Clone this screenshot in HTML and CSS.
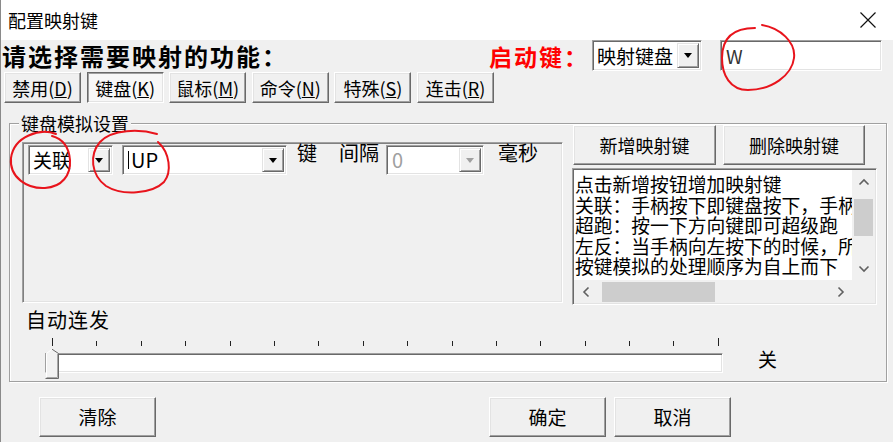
FILE: index.html
```html
<!DOCTYPE html>
<html lang="zh-CN">
<head>
<meta charset="utf-8">
<title>配置映射键</title>
<link rel="stylesheet" href="styles.css">
</head>
<body>
<div class="window">
  <div class="titlebar">
    <span class="title">配置映射键</span>
    <svg class="close" viewBox="0 0 18 18" width="18" height="18"><path d="M1.5 1.5L16.5 16.5M16.5 1.5L1.5 16.5" stroke="#111" stroke-width="1.2" fill="none"/></svg>
  </div>
  <div class="client">
    <div class="header">
      <div class="heading">请选择需要映射的功能：</div>
      <div class="hotkey-label">启动键：</div>
      <div class="field combo combo-hotkey"><span class="combo-text">映射键盘</span><span class="drop"><i class="tri"></i></span></div>
      <div class="field edit-key">W</div>
    </div>
    <div class="tabs">
      <button class="btn tab">禁用(<u>D</u>)</button>
      <button class="btn tab active">键盘(<u>K</u>)</button>
      <button class="btn tab">鼠标(<u>M</u>)</button>
      <button class="btn tab">命令(<u>N</u>)</button>
      <button class="btn tab">特殊(<u>S</u>)</button>
      <button class="btn tab">连击(<u>R</u>)</button>
    </div>
    <div class="group">
      <div class="group-label">键盘模拟设置</div>
      <div class="group-top">
        <div class="panel">
          <div class="field combo combo-mode"><span class="combo-text">关联</span><span class="drop"><i class="tri"></i></span></div>
          <div class="field combo combo-key"><span class="combo-text latin"><span class="caret"></span>UP</span><span class="drop"><i class="tri"></i></span></div>
          <span class="lbl lbl-key">键</span>
          <span class="lbl lbl-int">间隔</span>
          <div class="field combo combo-int disabled"><span class="combo-text latin">0</span><span class="drop"><i class="tri"></i></span></div>
          <span class="lbl lbl-ms">毫秒</span>
        </div>
        <div class="side">
          <div class="side-buttons">
            <button class="btn btn-add">新增映射键</button>
            <button class="btn btn-del">删除映射键</button>
          </div>
          <div class="field listbox">
            <div class="list-content">
              <div class="line">点击新增按钮增加映射键</div>
              <div class="line">关联：手柄按下即键盘按下，手柄松开即键盘松开</div>
              <div class="line">超跑：按一下方向键即可超级跑</div>
              <div class="line">左反：当手柄向左按下的时候，所有的左右方向反转</div>
              <div class="line">按键模拟的处理顺序为自上而下</div>
            </div>
            <div class="vscroll">
              <div class="sbtn"><svg width="12" height="8" viewBox="0 0 12 8"><path d="M1.5 6.5L6 2L10.5 6.5" stroke="#606060" stroke-width="1.6" fill="none"/></svg></div>
              <div class="vthumb"></div>
              <div class="sfill"></div>
              <div class="sbtn"><svg width="12" height="8" viewBox="0 0 12 8"><path d="M1.5 1.5L6 6L10.5 1.5" stroke="#606060" stroke-width="1.6" fill="none"/></svg></div>
            </div>
            <div class="hscroll">
              <div class="sbtn"><svg width="8" height="12" viewBox="0 0 8 12"><path d="M6.5 1.5L2 6L6.5 10.5" stroke="#606060" stroke-width="1.6" fill="none"/></svg></div>
              <div class="hthumb"></div>
              <div class="sfill"></div>
              <div class="sbtn"><svg width="8" height="12" viewBox="0 0 8 12"><path d="M1.5 1.5L6 6L1.5 10.5" stroke="#606060" stroke-width="1.6" fill="none"/></svg></div>
            </div>
            <div class="corner"></div>
          </div>
        </div>
      </div>
      <div class="auto-label">自动连发</div>
      <div class="slider-row">
        <div class="slider">
          <div class="ticks">
            <i class="tick end"></i><i class="tick"></i><i class="tick"></i><i class="tick"></i>
            <i class="tick"></i><i class="tick"></i><i class="tick"></i><i class="tick"></i>
            <i class="tick"></i><i class="tick"></i><i class="tick"></i><i class="tick"></i>
            <i class="tick"></i><i class="tick"></i><i class="tick"></i><i class="tick end"></i>
          </div>
          <div class="field track"></div>
          <svg class="thumb" width="15" height="31" viewBox="0 0 15 31">
            <path d="M1 5.5L7 0.8L13.5 5.5V30H1Z" fill="#f2f2f2"/>
            <path d="M1.5 30V5.5L7 1.2" stroke="#ffffff" stroke-width="1" fill="none"/>
            <path d="M7 1.2L13.5 5.5V30.5H0.5" stroke="#6a6a6a" stroke-width="1" fill="none"/>
            <path d="M12.5 6V29.5H1.5" stroke="#a8a8a8" stroke-width="1" fill="none"/>
          </svg>
        </div>
        <span class="slider-value">关</span>
      </div>
    </div>
    <div class="footer">
      <button class="btn big">清除</button>
      <button class="btn big btn-ok">确定</button>
      <button class="btn big btn-cancel">取消</button>
    </div>
  </div>
  <svg class="annotations" width="893" height="442" viewBox="0 0 893 442">
    <path d="M762 25C780 28 796 42 794 58C792 75 772 90 748 90C730 90 722 75 722 58C722 40 731 28 755 28" stroke="#e8141c" stroke-width="2" fill="none" stroke-linecap="round"/>
    <path d="M56 134C40 128 14 136 11 158C9 178 28 189 45 188C62 187 71 175 70 160C69 148 63 139 52 136" stroke="#e8141c" stroke-width="2" fill="none" stroke-linecap="round"/>
    <path d="M157 134C140 129 112 129 100 142C89 155 91 175 106 186C122 196 152 194 164 182C172 172 170 153 158 142" stroke="#e8141c" stroke-width="2" fill="none" stroke-linecap="round"/>
  </svg>
</div>
</body>
</html>
```

FILE: styles.css
```css
* { box-sizing: border-box; }
html, body { margin: 0; padding: 0; }
body {
  width: 893px;
  height: 442px;
  overflow: hidden;
  background: #f0f0f0;
  font-family: "Noto Sans CJK SC", "Noto Sans", sans-serif;
  color: #000;
}
.window {
  position: relative;
  width: 893px;
  height: 442px;
  border-left: 1px solid #8a8a8a;
}
.titlebar {
  height: 40px;
  background: #fff;
  display: flex;
  align-items: center;
  padding-left: 7px;
}
.title { flex: 1; font-size: 18px; line-height: 20px; }
.close { margin-right: 16px; }

/* generic sunken field */
.field {
  background: #fff;
  border: 1px solid;
  border-color: #a0a0a0 #ffffff #ffffff #a0a0a0;
  box-shadow: inset 1px 1px #696969, inset -1px -1px #e3e3e3;
}

/* header */
.header {
  display: flex;
  align-items: center;
  height: 31px;
  padding-left: 1px;
}
.heading {
  width: 487px;
  font-size: 24px;
  font-weight: bold;
  line-height: 28px;
  white-space: nowrap;
  letter-spacing: 2px;
}
.hotkey-label {
  width: 103px;
  color: #f00;
  font-size: 23px;
  font-weight: bold;
  line-height: 28px;
  white-space: nowrap;
  letter-spacing: 2px;
}
.combo {
  display: flex;
  align-items: stretch;
  padding: 2px;
}
.combo-text {
  flex: 1;
  display: flex;
  align-items: center;
  padding-left: 2px;
  font-size: 19px;
  line-height: 22px;
  white-space: nowrap;
}
.combo-text.latin { font-size: 20px; padding-left: 3px; }
.caret { width: 1px; height: 18px; background: #000; margin-right: 2px; }
.drop {
  width: 22px;
  background: #f0f0f0;
  border: 1px solid;
  border-color: #e3e3e3 #696969 #696969 #e3e3e3;
  box-shadow: inset 1px 1px #fff, inset -1px -1px #a0a0a0;
  display: flex;
  align-items: center;
  justify-content: center;
}
.tri {
  width: 0;
  height: 0;
  border-left: 4.5px solid transparent;
  border-right: 4.5px solid transparent;
  border-top: 5px solid #000;
}
.combo-hotkey { width: 110px; height: 31px; }
.edit-key {
  width: 162px;
  height: 31px;
  margin-left: 18px;
  padding-left: 5px;
  font-size: 19px;
  line-height: 29px;
  color: #333;
}

/* buttons */
.btn {
  margin: 0;
  padding: 0;
  font-family: inherit;
  font-size: 18px;
  line-height: 20px;
  color: #000;
  background: #f0f0f0;
  border: 1px solid;
  border-color: #ffffff #696969 #696969 #ffffff;
  box-shadow: inset -1px -1px #a0a0a0, inset 1px 1px #e3e3e3;
}
.btn u { text-underline-offset: 1px; }
.tabs {
  display: flex;
  gap: 5.6px;
  margin-top: 1px;
  height: 31px;
  padding-left: 3px;
}
.tab { width: 77px; height: 31px; }
.tab.active {
  background: #f7f7f7;
  border-color: #696969 #ffffff #ffffff #696969;
  box-shadow: inset 1px 1px #a0a0a0, inset -1px -1px #e3e3e3;
}

/* group box */
.group {
  position: relative;
  margin: 20px 0 0 8px;
  width: 878px;
  height: 259px;
  border: 1px solid #a0a0a0;
  box-shadow: inset 1px 1px #fff, 1px 1px #fff;
  padding-left: 12px;
}
.group-label {
  position: absolute;
  left: 9px;
  top: -11px;
  padding: 0 2px;
  background: #f0f0f0;
  font-size: 18px;
  line-height: 20px;
}
.group-top {
  display: flex;
  align-items: flex-start;
  height: 181px;
}
.panel {
  margin-top: 18px;
  width: 541px;
  height: 161px;
  display: flex;
  align-items: flex-start;
  padding: 1px;
  border: 1px solid;
  border-color: #a0a0a0 #ffffff #ffffff #a0a0a0;
  box-shadow: inset 1px 1px #808080, inset -1px -1px #e3e3e3;
}
.panel .combo { height: 30px; margin-top: 1px; }
.combo-mode { width: 85px; margin-left: 4px; }
.combo-key { width: 165px; margin-left: 9px; }
.combo-int { width: 98px; margin-left: 7px; height: 31px; margin-top: 0; }
.combo.disabled .combo-text { color: #a0a0a0; }
.combo.disabled .tri { border-top-color: #a0a0a0; }
.lbl { font-size: 20px; line-height: 20px; margin-top: -1px; white-space: nowrap; }
.lbl-key { margin-left: 10px; }
.lbl-int { margin-left: 22px; }
.lbl-ms { margin-left: 14px; }

.side { margin-left: 9px; width: 305px; }
.side-buttons { display: flex; margin-top: 1px; padding-left: 1px; gap: 7px; }
.btn-add { width: 143px; height: 40px; }
.btn-del { width: 142px; height: 40px; }

.listbox {
  margin-top: 3px;
  width: 305px;
  height: 137px;
  padding: 1px;
  display: grid;
  grid-template-columns: 1fr 23px;
  grid-template-rows: 1fr 23px;
}
.list-content {
  padding: 4px 0 0 1px;
  font-size: 18.8px;
  line-height: 20.5px;
  white-space: nowrap;
  overflow: hidden;
}
.line { height: 20.5px; }
.vscroll {
  background: #f0f0f0;
  display: flex;
  flex-direction: column;
}
.hscroll {
  background: #f0f0f0;
  display: flex;
}
.sbtn {
  flex: 0 0 23px;
  display: flex;
  align-items: center;
  justify-content: center;
}
.vscroll .sbtn { height: 23px; }
.vthumb { margin: 6px 2px 0; height: 37px; background: #cdcdcd; }
.hthumb { margin: 2px 0 1px 5px; width: 113px; background: #cdcdcd; }
.sfill { flex: 1; }
.corner { background: #f0f0f0; }

.auto-label {
  margin: 4px 0 0 4px;
  font-size: 20px;
  line-height: 22px;
  letter-spacing: 1px;
}
.slider-row {
  display: flex;
  align-items: flex-start;
  margin-top: 5px;
}
.slider {
  position: relative;
  margin-left: 23px;
  width: 678px;
  height: 44px;
}
.ticks {
  display: flex;
  justify-content: space-between;
  align-items: flex-end;
  margin: 2px 0 0 7px;
  width: 667px;
  height: 8px;
}
.tick { display: block; width: 1px; height: 5px; background: #222; }
.tick.end { height: 8px; }
.track { margin-top: 7px; height: 20px; }
.thumb { position: absolute; left: 0; top: 12px; }
.slider-value {
  margin: 12px 0 0 35px;
  font-size: 19px;
  line-height: 22px;
}

.footer {
  display: flex;
  margin-top: 15px;
  padding-left: 38px;
}
.big { width: 117px; height: 40px; font-size: 19px; }
.btn-ok { margin-left: 333px; }
.btn-cancel { margin-left: 8px; }

.annotations {
  position: absolute;
  left: -1px;
  top: 0;
  pointer-events: none;
}
```
